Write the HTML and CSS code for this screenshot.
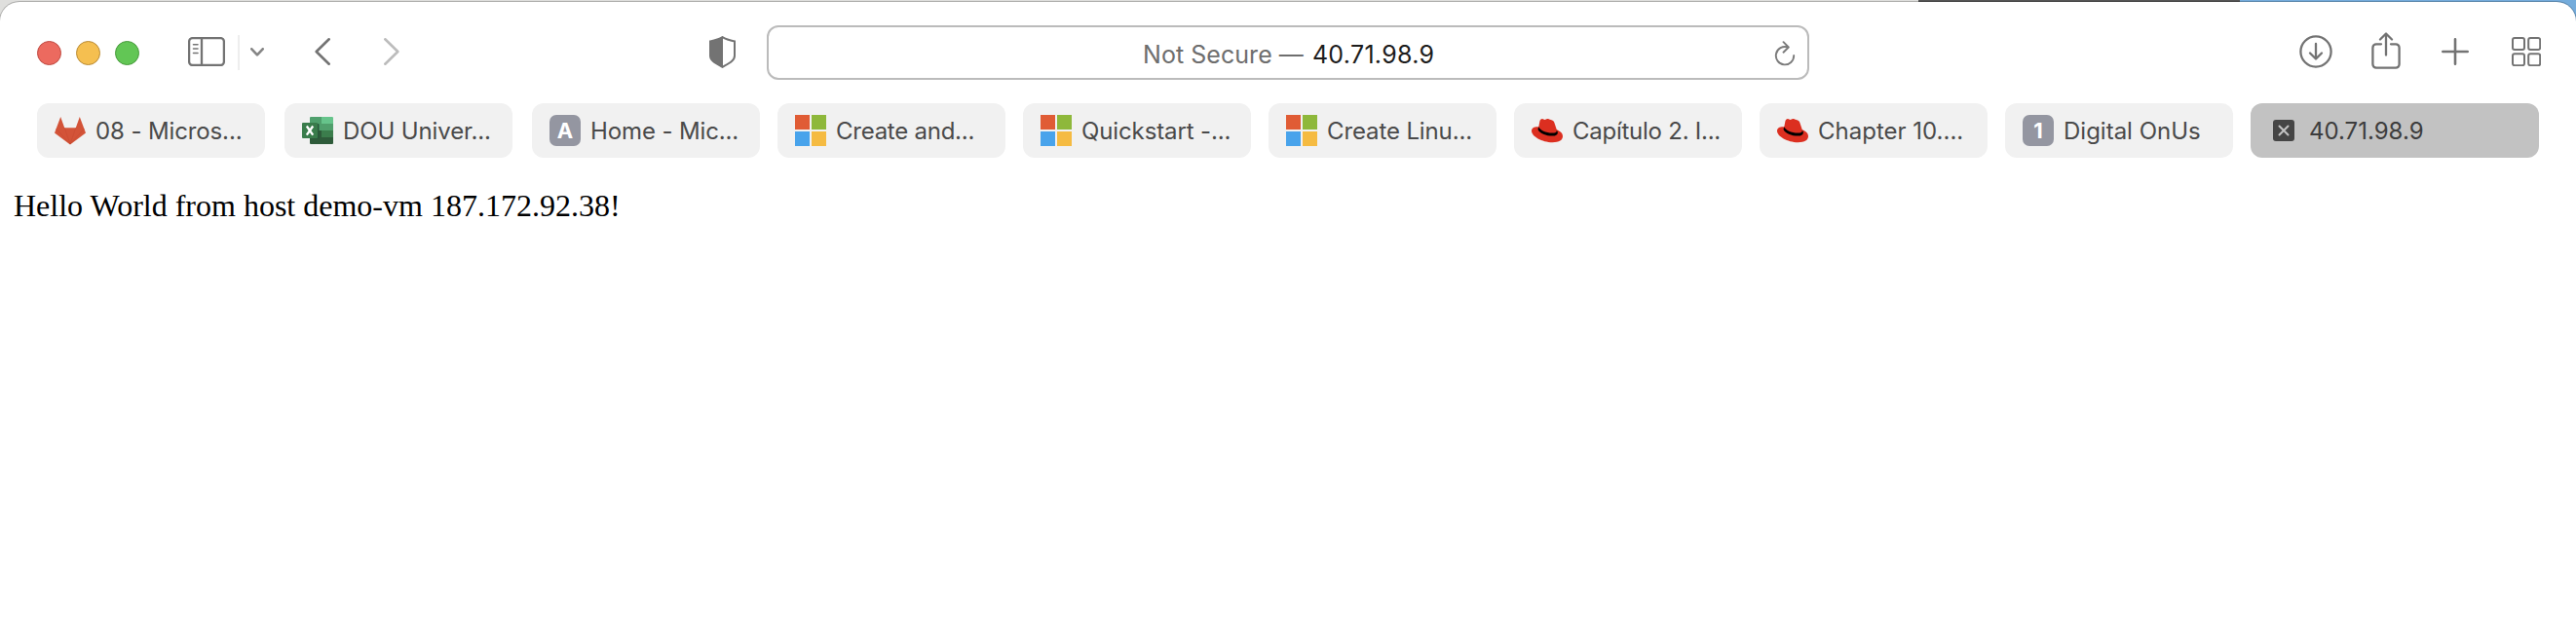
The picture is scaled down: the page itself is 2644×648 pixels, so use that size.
FILE: index.html
```
<!DOCTYPE html>
<html lang="en">
<head>
<meta charset="utf-8">
<title>40.71.98.9</title>
<link rel="stylesheet" href="styles.css">
</head>
<body>
<svg class="symbols" width="0" height="0">
  <symbol id="windows" viewBox="0 0 32 32">
    <path fill="#e05c35" d="M0 0h15v15H0z"/><path fill="#8eb83b" d="M17 0h15v15H17z"/>
    <path fill="#48a3eb" d="M0 17h15v15H0z"/><path fill="#f5bb42" d="M17 17h15v15H17z"/>
  </symbol>
  <symbol id="hat" viewBox="0 0 32 32">
    <path fill="#dc2f20" d="M7.3 12.2C2.500 12 0 13.400 0 16.500c0 5.500 10.800 11.700 21.500 11.700 6.800 0 10.500-2.400 10.500-6.200 0-3.300-2.400-5.300-6.200-6.800L23.300 7.800c-.5-1.500-1.600-2.400-3.500-2.800-1.200-.3-2.200-1-3.600-1-1.200 0-1.600.9-2.700.9-1 0-1.500-.9-2.500-.9-1.400 0-2.200 1-2.600 2.500z"/>
    <path fill="#000" d="M7.300 12.200 6.500 14.700c1.200 4 8.800 6.900 14.700 6.900 3.800 0 6.100-1.500 5.600-3.900l-1-2.500c.4 2.600-1.600 3.400-4.700 3.400-6 0-12.800-3.200-13.800-6.400z"/>
  </symbol>
</svg>
<div class="window">
  <header class="toolbar">
    <div class="lights"><span class="light red"></span><span class="light yellow"></span><span class="light green"></span></div>
    <svg class="sidebar line" width="38" height="30" viewBox="0 0 38 30"><rect x="1.100" y="1.100" width="35.800" height="27.800" rx="3.500"/><path d="M14 1v28"/><path class="thin" d="M5.500 7.700h4.500M5.500 12h4.500M5.500 16.500h4.500"/></svg>
    <span class="divider"></span>
    <svg class="menu line" width="14" height="10" viewBox="0 0 14 10"><path d="M1.300 1.300 7 7.300l5.700-6"/></svg>
    <svg class="back line" width="16" height="28" viewBox="0 0 16 28"><path d="M14.700 1.300 1.700 14l13 12.700"/></svg>
    <svg class="forward line" width="16" height="28" viewBox="0 0 16 28"><path d="m1.300 1.300 13 12.700-13 12.700"/></svg>
    <svg class="shield" width="27" height="33" viewBox="0 0 27 33"><path fill="none" stroke="#737373" stroke-width="2" d="M13.500 1.100C17 3.300 21 4.400 26 5.400v14.800c0 5.300-6 8-12.500 11.700C7 28.200 1 25.500 1 20.200V5.400c5-1 9-2.100 12.500-4.300z"/><path fill="#737373" d="M14 1C10 3.400 6 4.400 1 5.400v14.800c0 5.300 6 8 13 11.700z"/></svg>
    <div class="address">
      <span class="origin"><span class="warning">Not Secure —</span><span class="host">40.71.98.9</span></span>
      <svg class="reload" width="22" height="26" viewBox="0 0 22 26"><path d="M14 6.500A9.200 9.200 0 1 0 20.200 15M9.500 1.200l5.300 5.300-5.300 5.200"/></svg>
    </div>
    <svg class="download line" width="34" height="34" viewBox="0 0 34 34"><circle cx="17" cy="17" r="15.600"/><path d="M17 9v15.500M11 18.500l6 6 6-6"/></svg>
    <svg class="share line" width="30" height="38" viewBox="0 0 30 38"><path d="M10 12.300H5a3.600 3.600 0 0 0-3.600 3.600v17.200A3.600 3.600 0 0 0 5 36.700h20a3.600 3.600 0 0 0 3.600-3.600V15.900a3.600 3.600 0 0 0-3.600-3.600h-5M15 23.500V1.700M9 7.500l6-6 6 6"/></svg>
    <svg class="plus line" width="28" height="28" viewBox="0 0 28 28"><path d="M14 1.300v25.400M1.300 14h25.400"/></svg>
    <svg class="overview line" width="30" height="30" viewBox="0 0 30 30"><rect x="1" y="1" width="12" height="12" rx="2"/><rect x="17.200" y="1" width="12" height="12" rx="2"/><rect x="1" y="17.200" width="12" height="12" rx="2"/><rect x="17.200" y="17.200" width="12" height="12" rx="2"/></svg>
  </header>
  <nav class="tabs">
    <div class="tab wide-gap"><svg class="icon" viewBox="0 0 32 32"><path fill="#d35338" d="m16 30.500-16-12L6.200 2l4 11.200h11.600L25.800 2 32 18.500z"/><path fill="none" stroke="#c84a31" stroke-width=".6" d="m1.500 14 14.500 16L30.500 14M10.200 13.200 16 30l5.800-16.800"/></svg><span class="title snug">08 - Micros...</span></div>
    <div class="tab wide-gap"><svg class="icon" viewBox="0 0 32 32"><path fill="#4f9f6c" d="M8 3a1 1 0 0 1 1-1h11v14H8z"/><path fill="#66c48b" d="M20 2h11a1 1 0 0 1 1 1v6H20z"/><path fill="#509f6c" d="M20 9h12v7H20z"/><path fill="#2e5b3a" d="M8 16h12v7h12v6a1 1 0 0 1-1 1H9a1 1 0 0 1-1-1z"/><path fill="#3b7d4c" d="M20 16h12v7H20z"/><path fill="#28583a" d="M8 9h8.500a1 1 0 0 1 1 1v14.500H8z"/><rect y="8" width="16" height="16" rx="1" fill="#397c4b"/><path stroke="#fff" stroke-width="2.300" d="m4.800 11.500 6.400 9.200M11.200 11.500l-6.400 9.200"/></svg><span class="title snug">DOU Univer...</span></div>
    <div class="tab"><span class="icon letter">A</span><span class="title snug">Home - Mic...</span></div>
    <div class="tab"><svg class="icon"><use href="#windows"/></svg><span class="title tight">Create and...</span></div>
    <div class="tab"><svg class="icon"><use href="#windows"/></svg><span class="title snug">Quickstart -...</span></div>
    <div class="tab"><svg class="icon"><use href="#windows"/></svg><span class="title snug">Create Linu...</span></div>
    <div class="tab"><svg class="icon"><use href="#hat"/></svg><span class="title tight">Capítulo 2. I...</span></div>
    <div class="tab"><svg class="icon"><use href="#hat"/></svg><span class="title">Chapter 10....</span></div>
    <div class="tab"><span class="icon letter">1</span><span class="title">Digital OnUs</span></div>
    <div class="tab active"><svg class="close" width="22" height="22" viewBox="0 0 22 22"><rect width="22" height="22" rx="3" fill="#454545"/><path stroke="#c3c3c3" stroke-width="2" stroke-linecap="round" d="m6.500 6.500 9 9M15.500 6.500l-9 9"/></svg><span class="title">40.71.98.9</span></div>
  </nav>
  <main class="page">Hello World from host demo-vm 187.172.92.38!</main>
</div>
</body>
</html>
```
FILE: styles.css
```
* { box-sizing: border-box; }
body {
  margin: 0;
  height: 648px;
  padding-top: 2px;
  overflow: hidden;
  background: linear-gradient(90deg, #dfdfdd 1969px, #555 1969px, #555 2299px, #74acdc 2299px);
  font-family: Inter, "Liberation Sans", sans-serif;
}
svg { display: block; flex: none; }
.symbols { position: absolute; }
.window {
  height: 646px;
  background: #fff;
  border-radius: 20px 20px 0 0;
  box-shadow: 0 0 0 1px rgba(0, 0, 0, .22);
}
.toolbar { display: flex; align-items: flex-start; height: 104px; padding-left: 37.500px; }
.lights { display: flex; gap: 15px; margin-top: 39.500px; }
.light { width: 25px; height: 25px; border-radius: 50%; border: 1px solid; }
.red { background: #ec6a5f; border-color: #bf4a42; }
.yellow { background: #f5bf50; border-color: #b98b35; }
.green { background: #62c655; border-color: #479a3b; }
.line { fill: none; stroke: #737373; stroke-width: 2.3; stroke-linecap: round; stroke-linejoin: round; }
.thin { stroke-width: 1.6; }
.sidebar { margin: 36px 0 0 50.500px; }
.divider { width: 2px; height: 36px; margin: 34px 0 0 13px; background: #eee; }
.menu { margin: 47px 0 0 11px; stroke: #858585; stroke-width: 2.6; }
.back { margin: 37px 0 0 52px; stroke-width: 2.6; }
.forward { margin: 37px 0 0 55px; stroke: #bcbcbc; stroke-width: 2.6; }
.shield { margin: 35px 0 0 318px; }
.address {
  display: flex;
  align-items: center;
  width: 1070px;
  height: 56px;
  margin: 24px 0 0 32px;
  padding: 2px 12px 0 384px;
  border: 2px solid #bbb;
  border-radius: 12px;
  font-size: 25px;
}
.origin { display: flex; gap: 9px; flex: 1; padding-top: 1px; white-space: nowrap; }
.warning { color: #6e6e6e; letter-spacing: .05px; }
.host { color: #1c1c1c; letter-spacing: .3px; }
.reload { fill: none; stroke: #7b7b7b; stroke-width: 1.9; stroke-linecap: round; stroke-linejoin: round; }
.download { margin: 34px 0 0 503px; }
.share { margin: 31px 0 0 40px; }
.plus { margin: 36.500px 0 0 42px; stroke-width: 2.6; }
.overview { margin: 36px 0 0 44px; stroke-width: 2; }
.tabs { display: flex; height: 56px; padding-left: 38px; }
.tab {
  display: flex;
  align-items: center;
  width: 234px;
  height: 56px;
  margin-right: 18px;
  padding-left: 18px;
  border-radius: 12px;
  background: #f1f1f1;
  color: #4a4a4a;
  font-size: 24px;
  white-space: nowrap;
}
.wide-gap { margin-right: 20px; }
.icon { width: 32px; height: 32px; flex: none; }
.letter {
  border-radius: 7px;
  background: #9496a1;
  color: #fff;
  font-size: 22px;
  font-weight: 700;
  line-height: 32px;
  text-align: center;
}
.title { margin-left: 10px; }
.snug { letter-spacing: -.12px; }
.tight { letter-spacing: -.25px; }
.active { width: 296px; margin: 0; padding-left: 23px; background: #c2c2c2; color: #3d3d3d; }
.active .title { margin-left: 15px; }
.page { padding: 31px 0 0 14px; font: 32px/37px "Liberation Serif", serif; color: #000; }
```
